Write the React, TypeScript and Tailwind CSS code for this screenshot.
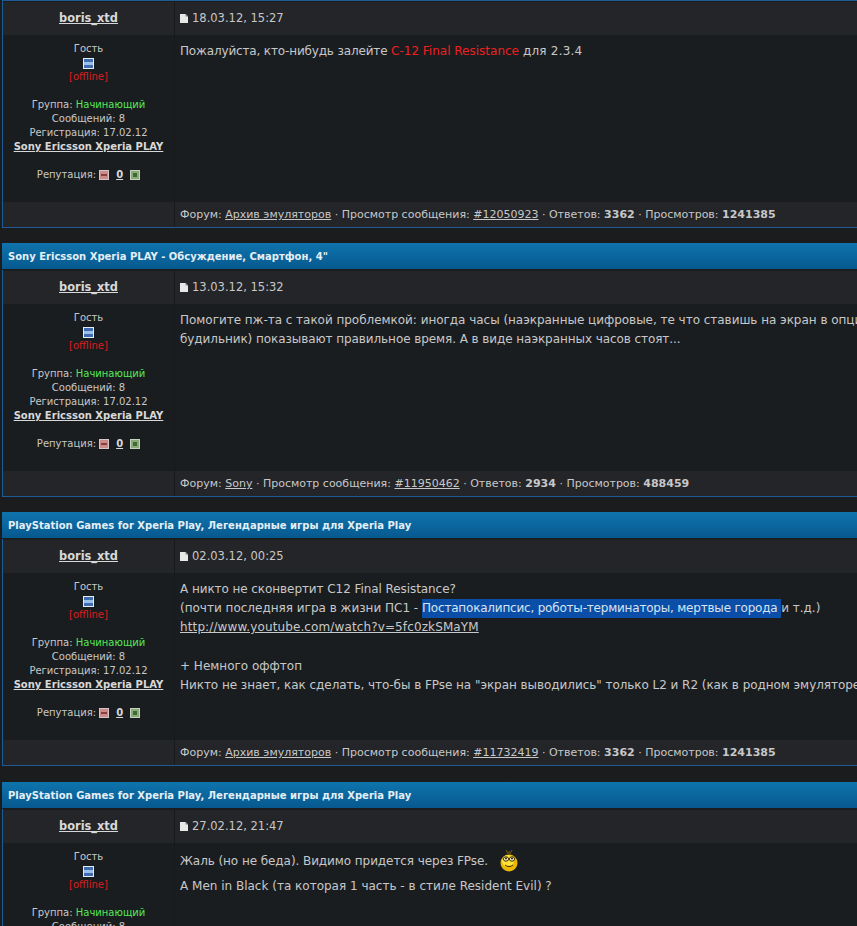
import React from "react";

function DocIcon() {
  return (
    <svg width="8" height="9" viewBox="0 0 8 9" className="mr-[4px] inline-block">
      <path d="M0 0H5.5L8 2.5V9H0Z" fill="#e8e8e8" />
      <path d="M5.5 0V2.5H8" fill="#8a8a8a" />
    </svg>
  );
}

function Smile() {
  return (
    <svg width="18" height="24" viewBox="0 0 18 24" className="ml-[12px] -mt-[3px]">
      <path d="M6 1L8 5M12 1L10 5M9 2V5" stroke="#7a5a10" strokeWidth="1" fill="none" />
      <circle cx="9" cy="14" r="8.5" fill="#eab800" />
      <circle cx="8" cy="12" r="6" fill="#ffe23a" />
      <ellipse cx="6" cy="10" rx="2.6" ry="2.2" fill="#fff6c0" stroke="#3a2a00" strokeWidth="1" />
      <ellipse cx="12" cy="10" rx="2.6" ry="2.2" fill="#fff6c0" stroke="#3a2a00" strokeWidth="1" />
      <circle cx="6" cy="9.5" r="1" fill="#222" />
      <circle cx="12" cy="9.5" r="1" fill="#222" />
      <path d="M5 16C7 18 11 18 13 16" stroke="#3a2a00" strokeWidth="1" fill="none" />
    </svg>
  );
}

function RepBox({ kind }: { kind: "minus" | "plus" }) {
  const minus = kind === "minus";
  return (
    <span
      className={`inline-flex w-[10px] h-[10px] items-center justify-center border ${
        minus ? "bg-[#c98a8a] border-[#d8c4c4]" : "bg-[#8aa878] border-[#c4d4bc]"
      }`}
    >
      <span className={minus ? "w-[6px] h-[2px] bg-[#8a4040]" : "w-[4px] h-[4px] bg-[#3f6a34]"} />
    </span>
  );
}

function Sidebar() {
  return (
    <div className="flex flex-col items-center pt-[7px] text-[10px] leading-[14px] text-[#c8c8c8] h-full">
      <div>Гость</div>
      <span className="h-[14px] flex items-center">
        <span className="shrink-0 w-[11px] h-[11px] border border-[#e4ecf4] bg-[#3f6cb0] flex items-center justify-center">
          <span className="w-[9px] h-[3px] bg-[#9cc0e8]" />
        </span>
      </span>
      <div className="text-[#d81e1e]">[offline]</div>
      <div className="h-[14px]" />
      <div>
        Группа: <span className="text-[#55e855]">Начинающий</span>
      </div>
      <div>Сообщений: 8</div>
      <div>Регистрация: 17.02.12</div>
      <div className="font-bold underline text-[#d8d8d8] whitespace-nowrap">Sony Ericsson Xperia PLAY</div>
      <div className="h-[14px]" />
      <div className="flex items-center">
        <span>Репутация:</span>
        <span className="ml-[3px] flex"><RepBox kind="minus" /></span>
        <span className="ml-[7px] font-bold underline text-[#d8d8d8]">0</span>
        <span className="ml-[7px] flex"><RepBox kind="plus" /></span>
      </div>
    </div>
  );
}

type Post = {
  title?: string;
  date: string;
  body: React.ReactNode;
  forum: string;
  id: string;
  answers: string;
  views: string;
};

function Card({ p, clip }: { p: Post; clip?: boolean }) {
  return (
    <div className={`w-[1100px] ml-[2px] border border-[#1f5c96] border-r-0 bg-[#1a1d20] ${clip ? "mt-[1px]" : ""}`}>
      {p.title && (
        <div className="h-[27px] -mx-px -mt-px bg-gradient-to-b from-[#0f74ad] to-[#07598f] border-b border-[#1a1d20] pl-[6px] flex items-center text-[10px] font-bold text-[#e4eef6] whitespace-nowrap">
          {p.title}
        </div>
      )}
      <div className="grid grid-cols-[172px_1fr]">
        <div className="h-[33px] mt-[1px] bg-[#232529] border-r border-[#17191b] flex items-center justify-center text-[11.4px] font-bold underline text-[#d8d8d8]">
          boris_xtd
        </div>
        <div className="h-[33px] mt-[1px] bg-[#232529] pl-[5px] flex items-center text-[11.5px] text-[#c8c8c8]">
          <DocIcon />
          {p.date}
        </div>
        <div className={`border-r border-[#17191b] ${clip ? "" : "h-[167px]"}`}>
          <Sidebar />
        </div>
        <div className="h-[167px] pl-[5px] pt-[7px] text-[12px] leading-[19.2px] text-[#c8c8c8] whitespace-nowrap">
          {p.body}
        </div>
        {!clip && (
          <>
            <div className="h-[25px] bg-[#232529] border-r border-[#17191b]" />
            <div className="h-[25px] bg-[#232529] pl-[5px] pt-[2px] flex items-center text-[11px] text-[#c8c8c8] whitespace-pre">
              Форум: <span className="underline">{p.forum}</span> · Просмотр сообщения:{" "}
              <span className="underline">{p.id}</span> · Ответов: <b>{p.answers}</b> · Просмотров: <b>{p.views}</b>
            </div>
          </>
        )}
      </div>
    </div>
  );
}

const posts: Post[] = [
  {
    date: "18.03.12, 15:27",
    body: (
      <>
        <span className="tracking-[-0.15px]">Пожалуйста, кто-нибудь залейте </span>
        <span className="text-[#ee2020]">C-12 Final Resistance</span>
        <span className="tracking-[0.2px]"> для 2.3.4</span>
      </>
    ),
    forum: "Архив эмуляторов",
    id: "#12050923",
    answers: "3362",
    views: "1241385",
  },
  {
    title: 'Sony Ericsson Xperia PLAY - Обсуждение, Смартфон, 4"',
    date: "13.03.12, 15:32",
    body: (
      <>
        <span className="tracking-[-0.03px]">
          Помогите пж-та с такой проблемкой: иногда часы (наэкранные цифровые, те что ставишь на экран в опциях
        </span>
        <br />
        <span className="tracking-[-0.07px]">
          будильник) показывают правильное время. А в виде наэкранных часов стоят...
        </span>
      </>
    ),
    forum: "Sony",
    id: "#11950462",
    answers: "2934",
    views: "488459",
  },
  {
    title: "PlayStation Games for Xperia Play, Легендарные игры для Xperia Play",
    date: "02.03.12, 00:25",
    body: (
      <>
        <span className="tracking-[-0.07px]">А никто не сконвертит C12 Final Resistance?</span>
        <br />
        (почти последняя игра в жизни ПС1 -{" "}
        <span className="inline-block bg-[#0a4ea8] text-[#d8e4f0] tracking-[-0.2px] whitespace-pre">
          Постапокалипсис, роботы-терминаторы, мертвые города{" "}
        </span>
        и т.д.)
        <br />
        <span className="underline tracking-[0.12px]">http://www.youtube.com/watch?v=5fc0zkSMaYM</span>
        <br />
        <br />
        + Немного оффтоп
        <br />
        <span className="tracking-[-0.05px]">
          Никто не знает, как сделать, что-бы в FPse на "экран выводились" только L2 и R2 (как в родном эмуляторе)
        </span>
      </>
    ),
    forum: "Архив эмуляторов",
    id: "#11732419",
    answers: "3362",
    views: "1241385",
  },
  {
    title: "PlayStation Games for Xperia Play, Легендарные игры для Xperia Play",
    date: "27.02.12, 21:47",
    body: (
      <div className="flex flex-col -mt-[1px]">
        <div className="h-[26px] flex items-center tracking-[-0.07px]">
          Жаль (но не беда). Видимо придется через FPse. <Smile />
        </div>
        <div className="h-[24px] flex items-center">A Men in Black (та которая 1 часть - в стиле Resident Evil) ?</div>
      </div>
    ),
    forum: "Архив эмуляторов",
    id: "",
    answers: "",
    views: "",
  },
];

export default function App() {
  return (
    <div className="w-[857px] h-[926px] overflow-hidden bg-[#1a1c1e] font-['DejaVu_Sans','Liberation_Sans',sans-serif]">
      <div className="flex flex-col gap-[15px]">
        {posts.map((p, i) => (
          <Card key={i} p={p} clip={i === 3} />
        ))}
      </div>
    </div>
  );
}
